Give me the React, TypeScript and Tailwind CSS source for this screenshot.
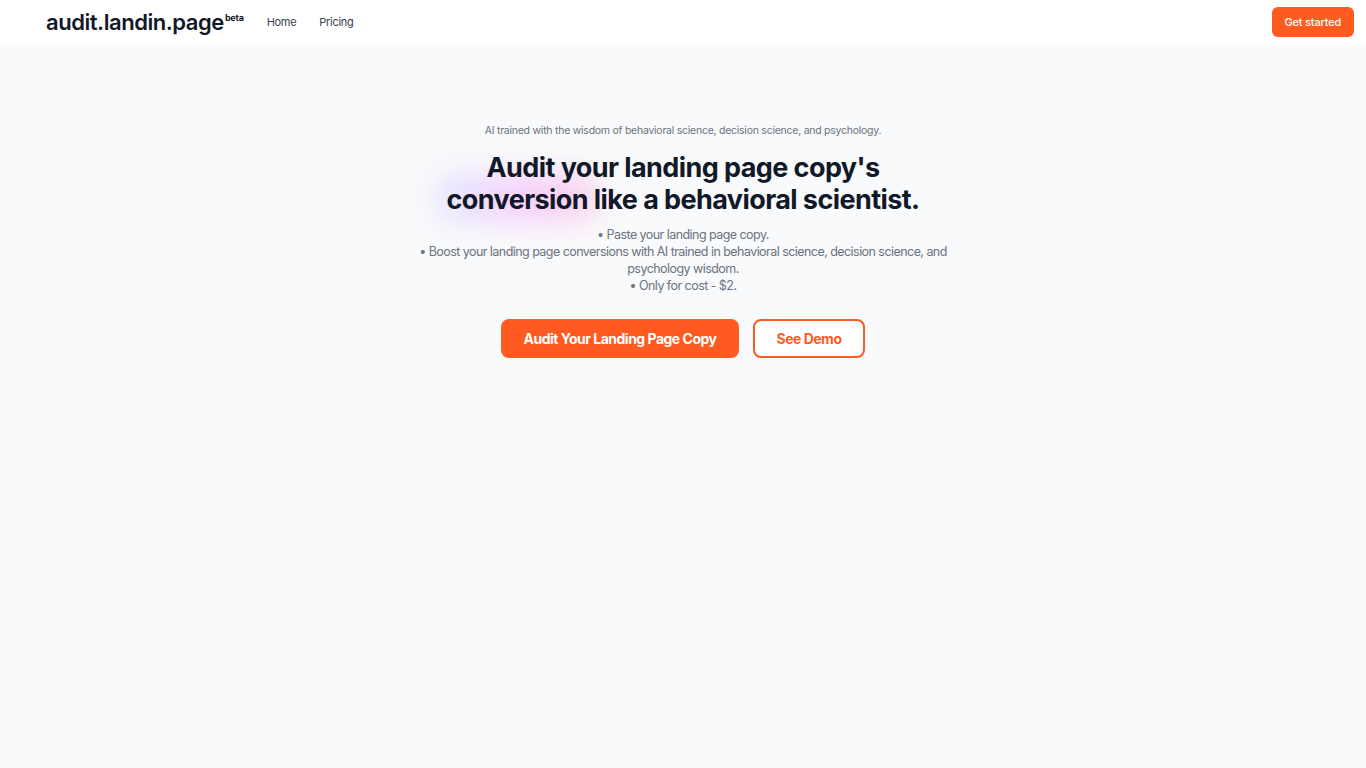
import React from 'react';

const font = { fontFamily: 'Inter, "Liberation Sans", sans-serif' };

const Header: React.FC = () => (
  <header className="h-[44px] bg-white flex items-center justify-between pl-[46px] pr-[12px]">
    <div className="flex items-center">
      <a href="#" className="text-[22px] font-semibold text-[#111827] tracking-[-0.45px] leading-none">
        audit.landin.page<sup className="text-[9px] font-bold ml-[1px] relative -top-[9px] tracking-[-0.2px]">beta</sup>
      </a>
      <nav className="flex items-center gap-[23px] ml-[23px] text-[11px] tracking-[-0.3px] text-[#374151]">
        <a href="#">Home</a>
        <a href="#">Pricing</a>
      </nav>
    </div>
    <button className="h-[30px] px-[13px] rounded-md bg-[#ff5a1f] text-white text-[11px] tracking-[-0.2px] font-medium">
      Get started
    </button>
  </header>
);

const App: React.FC = () => {
  return (
    <div className="min-h-screen bg-[#f9fafb]" style={font}>
      <Header />
      <main className="flex flex-col items-center text-center pt-[80px]">
        <p className="text-[10.5px] tracking-[-0.25px] text-[#6b7280] leading-[14px]">
          AI trained with the wisdom of behavioral science, decision science, and psychology.
        </p>
        <div className="relative mt-[14px]">
          <div className="absolute left-[-12px] top-[22px] w-[165px] h-[48px] rounded-full bg-gradient-to-r from-[#e0e7ff] via-[#f5d0fe] to-[#fbcfe8] blur-[14px]"></div>
          <h1 className="relative text-[27px] leading-[32px] font-bold text-[#111827] tracking-[-0.58px]">
            Audit your landing page copy's
            <br />
            conversion like a behavioral scientist.
          </h1>
        </div>
        <div className="mt-[10px] max-w-[540px] text-[12.5px] tracking-[-0.55px] leading-[17px] text-[#6b7280]">
          <p>• Paste your landing page copy.</p>
          <p>• Boost your landing page conversions with AI trained in behavioral science, decision science, and psychology wisdom.</p>
          <p>• Only for cost - $2.</p>
        </div>
        <div className="flex items-center gap-[14px] mt-[25px]">
          <button className="h-[39px] w-[238px] rounded-lg bg-[#ff5a1f] text-white text-[14px] tracking-[-0.5px] font-bold">
            Audit Your Landing Page Copy
          </button>
          <button className="h-[39px] w-[112px] rounded-lg bg-white border-2 border-[#ff5a1f] text-[#ff5a1f] text-[14px] tracking-[-0.5px] font-bold">
            See Demo
          </button>
        </div>
      </main>
    </div>
  );
};

export default App;
